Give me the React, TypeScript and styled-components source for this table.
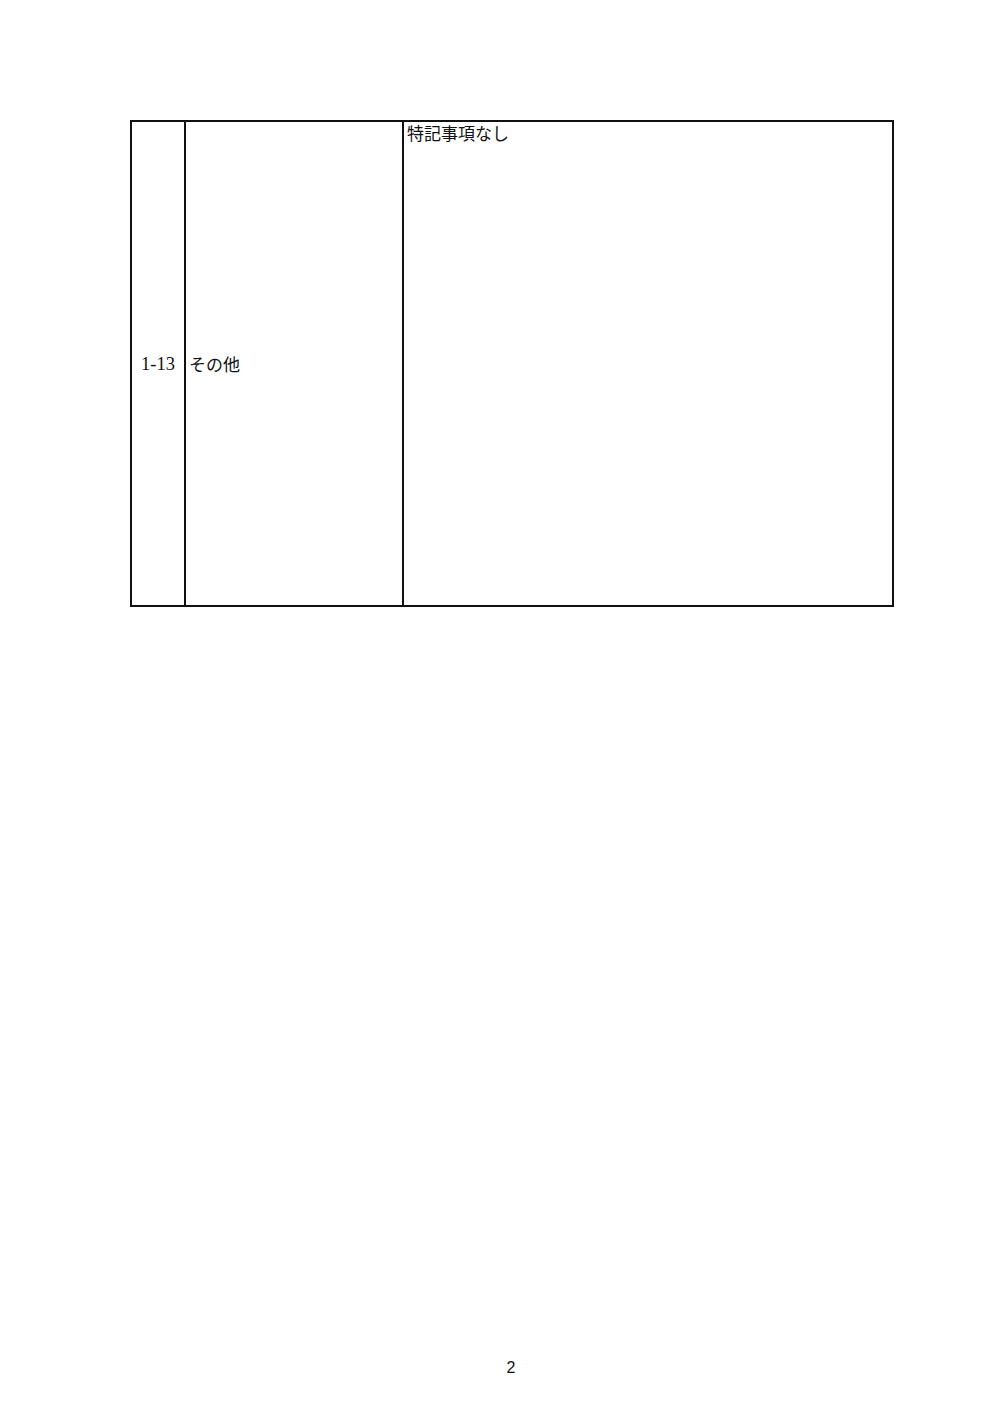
import styled, { createGlobalStyle } from "styled-components";

const GlobalStyle = createGlobalStyle`
  html, body {
    margin: 0;
    padding: 0;
    background: #ffffff;
  }
  body {
    font-family: "Noto Sans CJK JP", "Noto Sans", sans-serif;
    color: #111;
  }
`;

const Page = styled.div`
  width: 1000px;
  height: 1415px;
  box-sizing: border-box;
  padding: 120px 0 0 130px;
  display: flex;
  flex-direction: column;
`;

const Sheet = styled.div`
  width: 762px;
  display: flex;
  flex-direction: column;
  flex: 1;
`;

const Table = styled.table`
  width: 762px;
  border-collapse: collapse;
  table-layout: fixed;
`;

const Col = styled.col<{ $width: number }>`
  width: ${(p) => p.$width}px;
`;

const Cell = styled.td<{ $top?: boolean }>`
  height: 485px;
  box-sizing: border-box;
  border: 2px solid #111;
  padding: 0 3px;
  vertical-align: ${(p) => (p.$top ? "top" : "middle")};
  font-size: 17px;
  line-height: 22px;
  white-space: nowrap;
`;

const Num = styled.span`
  font-family: "Liberation Serif", "Noto Sans CJK JP", serif;
  font-size: 18.5px;
  padding-left: 6px;
`;

const Footer = styled.div`
  margin-top: auto;
  margin-bottom: 38px;
  text-align: center;
  font-family: "Liberation Sans", "Noto Sans", sans-serif;
  font-size: 16px;
`;

export default function App() {
  return (
    <>
      <GlobalStyle />
      <Page>
        <Sheet>
          <Table>
            <colgroup>
              <Col $width={54} />
              <Col $width={218} />
              <Col $width={490} />
            </colgroup>
            <tbody>
              <tr>
                <Cell>
                  <Num>1-13</Num>
                </Cell>
                <Cell>その他</Cell>
                <Cell $top>特記事項なし</Cell>
              </tr>
            </tbody>
          </Table>
          <Footer>2</Footer>
        </Sheet>
      </Page>
    </>
  );
}
